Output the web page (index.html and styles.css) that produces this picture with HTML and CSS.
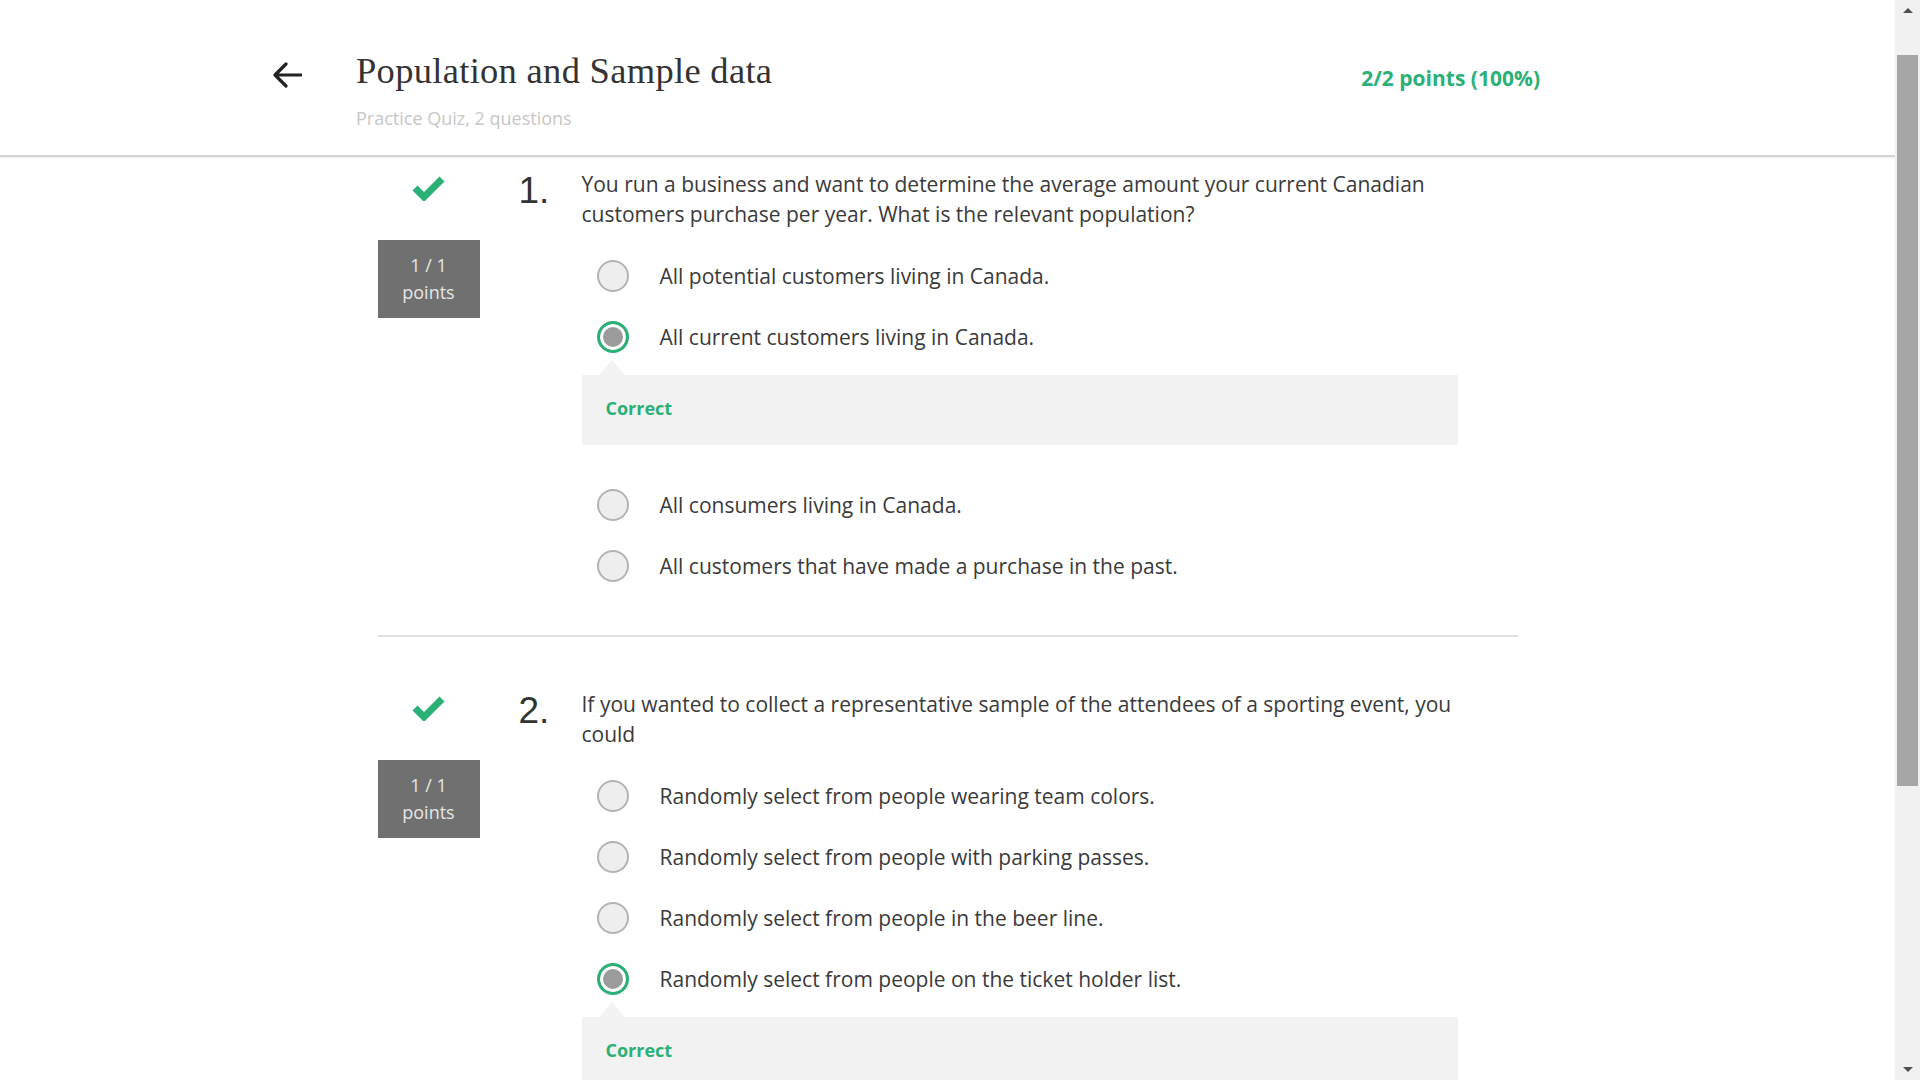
FILE: index.html
```html
<!DOCTYPE html>
<html lang="en">
<head>
<meta charset="utf-8">
<title>Population and Sample data</title>
<link rel="stylesheet" href="styles.css">
</head>
<body>
<div class="page">
  <header class="header">
    <svg class="back" width="30" height="26" viewBox="0 0 30 26" aria-hidden="true">
      <path d="M29 13 H3 M14 2 L3 13 L14 24" fill="none" stroke="#222" stroke-width="3.2" stroke-linecap="round" stroke-linejoin="round"/>
    </svg>
    <div class="titles">
      <h1 class="title">Population and Sample data</h1>
      <div class="subtitle">Practice Quiz, 2 questions</div>
    </div>
    <div class="score">2/2 points (100%)</div>
  </header>

  <main class="container">
    <section class="question">
      <div class="side">
        <svg class="check" width="33" height="25" viewBox="0 0 33 25" aria-hidden="true">
          <polyline points="3,12 12,21 30,3" fill="none" stroke="#2bb077" stroke-width="7"/>
        </svg>
        <div class="points">1 / 1<br>points</div>
      </div>
      <div class="num">1.</div>
      <div class="body">
        <p class="qtext">You run a business and want to determine the average amount your current Canadian customers purchase per year. What is the relevant population?</p>
        <ul class="options">
          <li class="option"><span class="radio"></span><span>All potential customers living in Canada.</span></li>
          <li class="option"><span class="radio sel"></span><span>All current customers living in Canada.</span></li>
          <li class="feedback">Correct</li>
          <li class="option"><span class="radio"></span><span>All consumers living in Canada.</span></li>
          <li class="option"><span class="radio"></span><span>All customers that have made a purchase in the past.</span></li>
        </ul>
      </div>
    </section>

    <hr class="divider">

    <section class="question">
      <div class="side">
        <svg class="check" width="33" height="25" viewBox="0 0 33 25" aria-hidden="true">
          <polyline points="3,12 12,21 30,3" fill="none" stroke="#2bb077" stroke-width="7"/>
        </svg>
        <div class="points">1 / 1<br>points</div>
      </div>
      <div class="num">2.</div>
      <div class="body">
        <p class="qtext">If you wanted to collect a representative sample of the attendees of a sporting event, you could</p>
        <ul class="options">
          <li class="option"><span class="radio"></span><span>Randomly select from people wearing team colors.</span></li>
          <li class="option"><span class="radio"></span><span>Randomly select from people with parking passes.</span></li>
          <li class="option"><span class="radio"></span><span>Randomly select from people in the beer line.</span></li>
          <li class="option"><span class="radio sel"></span><span>Randomly select from people on the ticket holder list.</span></li>
          <li class="feedback">Correct</li>
        </ul>
      </div>
    </section>
  </main>
</div>

<div class="scrollbar" aria-hidden="true">
  <span class="sb-up"></span>
  <span class="sb-thumb"></span>
  <span class="sb-down"></span>
</div>
</body>
</html>
```

FILE: styles.css
```css
html, body {
  margin: 0;
  padding: 0;
  background: #fff;
  overflow: hidden;
}

body {
  font-family: "Open Sans", "Noto Sans", sans-serif;
  color: #333;
}

.page {
  width: 1895px;
}

/* Header */
.header {
  display: flex;
  align-items: flex-start;
  height: 155px;
  padding: 0 355px 0 272px;
  border-bottom: 2px solid #d4d4d4;
  box-shadow: 0 1px 2px rgba(0, 0, 0, 0.08);
}

.back {
  display: block;
  margin-top: 62px;
}

.titles {
  margin-left: 54px;
  margin-top: 51px;
}

.title {
  margin: 0;
  font-family: "Liberation Serif", "DejaVu Serif", serif;
  font-weight: 400;
  font-size: 36.5px;
  line-height: 40px;
  color: #333;
  letter-spacing: 0.3px;
}

.subtitle {
  margin-top: 15px;
  font-size: 18px;
  line-height: 24px;
  color: #c6c6c6;
}

.score {
  margin-left: auto;
  margin-top: 64px;
  font-size: 21px;
  line-height: 28px;
  font-weight: 700;
  color: #2bb077;
}

/* Main */
.container {
  width: 1140px;
  margin: 0 auto;
}

.question {
  display: flex;
  align-items: flex-start;
  padding-top: 12px;
}

.side {
  width: 102px;
  display: flex;
  flex-direction: column;
  align-items: center;
  margin-top: 7px;
}

.check {
  display: block;
}

.points {
  width: 102px;
  height: 78px;
  margin-top: 39px;
  box-sizing: border-box;
  padding-top: 12px;
  background: #707070;
  color: #e6e6e6;
  font-size: 18px;
  line-height: 27px;
  text-align: center;
}

.num {
  width: 102px;
  box-sizing: border-box;
  padding-left: 39px;
  margin-top: 3px;
  font-family: "Liberation Sans", Arial, sans-serif;
  font-size: 37px;
  line-height: 37px;
  color: #333;
}

.body {
  width: 876px;
}

.qtext {
  margin: 0;
  font-size: 21px;
  line-height: 30px;
  color: #3a3a3a;
}

.options {
  list-style: none;
  margin: 16px 0 0;
  padding: 0;
}

.option {
  display: flex;
  align-items: center;
  height: 61px;
  padding-left: 15px;
  font-size: 21px;
  color: #3a3a3a;
}

.radio {
  flex: none;
  width: 32px;
  height: 32px;
  box-sizing: border-box;
  border-radius: 50%;
  border: 2px solid #b3b3b3;
  background: #eeeeee;
  margin-right: 31px;
}

.radio.sel {
  border: 3px solid #2bb077;
  background: #9b9b9b;
  box-shadow: inset 0 0 0 3px #fff;
}

.feedback {
  position: relative;
  margin: 8px 0 29px;
  height: 70px;
  box-sizing: border-box;
  padding: 21px 24px;
  background: #f2f2f2;
  color: #2bb077;
  font-size: 18px;
  line-height: 24px;
  font-weight: 700;
}

.feedback::before {
  content: "";
  position: absolute;
  left: 17px;
  top: -15px;
  border-left: 13px solid transparent;
  border-right: 13px solid transparent;
  border-bottom: 15px solid #f2f2f2;
}

.divider {
  margin: 39.3px 0 40px;
  border: 0;
  height: 2px;
  background: #e1e1e1;
}

/* Fake scrollbar */
.scrollbar {
  position: fixed;
  top: 0;
  right: 0;
  width: 25px;
  height: 1080px;
  background: #f1f1f1;
}

.sb-thumb {
  position: absolute;
  left: 2px;
  width: 21px;
  top: 55px;
  height: 731px;
  background: #a6a6a6;
}

.sb-up,
.sb-down {
  position: absolute;
  left: 8px;
  width: 0;
  height: 0;
  border-left: 5px solid transparent;
  border-right: 5px solid transparent;
}

.sb-up {
  top: 8px;
  border-bottom: 5px solid #505050;
}

.sb-down {
  bottom: 8px;
  border-top: 5px solid #505050;
}
```
